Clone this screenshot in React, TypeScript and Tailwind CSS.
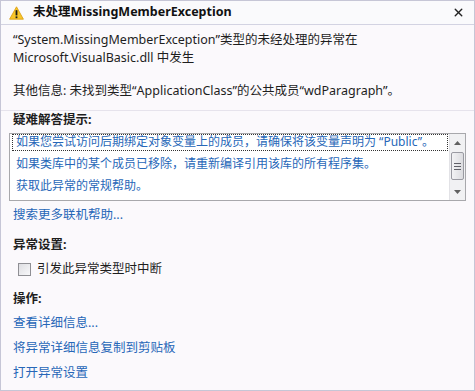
import { X } from 'lucide-react'

const TIPS = [
  '如果您尝试访问后期绑定对象变量上的成员，请确保将该变量声明为 “Public”。',
  '如果类库中的某个成员已移除，请重新编译引用该库的所有程序集。',
  '获取此异常的常规帮助。',
]

const ACTIONS = ['查看详细信息...', '将异常详细信息复制到剪贴板', '打开异常设置']

function WarningIcon() {
  return (
    <svg width="15" height="14" viewBox="0 0 15 14">
      <path d="M7.5 0.8 L14.4 13.2 L0.6 13.2 Z" fill="#f7c52a" stroke="#d99a0a" strokeWidth="0.8" strokeLinejoin="round" />
      <rect x="6.6" y="4.2" width="1.8" height="5.2" fill="#1a1a1a" />
      <rect x="6.6" y="10.4" width="1.8" height="1.8" fill="#1a1a1a" />
    </svg>
  )
}

function ScrollBar() {
  return (
    <div className="w-[16px] shrink-0 flex flex-col bg-[#f1f1f3] border-l border-[#e2e2e6]">
      <div className="h-[18px] flex items-center justify-center">
        <svg width="7" height="4" viewBox="0 0 7 4"><path d="M0 4 L3.5 0 L7 4 Z" fill="#606060" /></svg>
      </div>
      <div className="h-[28px] mx-[1px] rounded-[2px] border border-[#9a9aa2] bg-gradient-to-r from-[#f2f2f4] to-[#dcdce0] flex flex-col items-center justify-center gap-[2px]">
        <div className="w-[7px] h-px bg-[#606068]" />
        <div className="w-[7px] h-px bg-[#606068]" />
        <div className="w-[7px] h-px bg-[#606068]" />
      </div>
      <div className="flex-1" />
      <div className="h-[17px] flex items-center justify-center">
        <svg width="7" height="4" viewBox="0 0 7 4"><path d="M0 0 L3.5 4 L7 0 Z" fill="#606060" /></svg>
      </div>
    </div>
  )
}

export default function App() {
  return (
    <div
      className="w-[475px] h-[391px] flex flex-col bg-[#fbf9fc] border border-[#c6c6d6] text-[#1e1e1e] text-[12.5px] overflow-hidden"
      style={{ fontFamily: '"Noto Sans", "Noto Sans CJK SC", sans-serif' }}
    >
      {/* title bar */}
      <div className="h-[24px] shrink-0 flex items-center pl-[8px] pr-[9px] bg-[#fafafc] border-b border-[#d3d3e2]">
        <WarningIcon />
        <span className="ml-[9px] font-bold text-[12.5px] text-[#111]">未处理MissingMemberException</span>
        <X className="ml-auto w-[13px] h-[13px] text-[#222]" strokeWidth={2.6} />
      </div>

      {/* message */}
      <div className="px-[12px] pt-[6px] pb-[10px] leading-[18px] border-b border-[#e6e3ec]">
        <div>“System.MissingMemberException”类型的未经处理的异常在</div>
        <div>Microsoft.VisualBasic.dll 中发生</div>
        <div className="mt-[15px]">其他信息: 未找到类型“ApplicationClass”的公共成员“wdParagraph”。</div>
      </div>

      {/* troubleshooting */}
      <div className="px-[12px] leading-[18px] font-bold">疑难解答提示:</div>
      <div className="mx-[8px] mt-[4px] h-[68px] flex border border-[#a8a8ac] bg-white">
        <div className="flex-1 flex flex-col gap-[5px] pl-[2px] pr-[1px] text-[12px]">
          {TIPS.map((t, i) => (
            <div
              key={t}
              className={`h-[17px] leading-[14px] pl-[3px] text-[#2767b8] whitespace-nowrap ${i === 0 ? 'border border-dotted border-[#333]' : 'border border-transparent'}`}
            >
              {t}
            </div>
          ))}
        </div>
        <ScrollBar />
      </div>
      <div className="px-[12px] mt-[5px] leading-[18px] text-[#2767b8]">搜索更多联机帮助...</div>

      {/* settings */}
      <div className="px-[12px] mt-[12px] leading-[18px] font-bold">异常设置:</div>
      <div className="pl-[17px] mt-[6px] h-[18px] flex items-center">
        <div className="w-[13px] h-[13px] border border-[#8f8f94] bg-gradient-to-br from-[#dedee2] to-[#f8f8fa]" />
        <span className="ml-[6px]">引发此异常类型时中断</span>
      </div>

      {/* actions */}
      <div className="px-[12px] mt-[12px] leading-[18px] font-bold">操作:</div>
      <div className="px-[12px] mt-[6px] flex flex-col gap-[7px] leading-[18px] text-[#2767b8]">
        {ACTIONS.map(a => (
          <div key={a}>{a}</div>
        ))}
      </div>
    </div>
  )
}
